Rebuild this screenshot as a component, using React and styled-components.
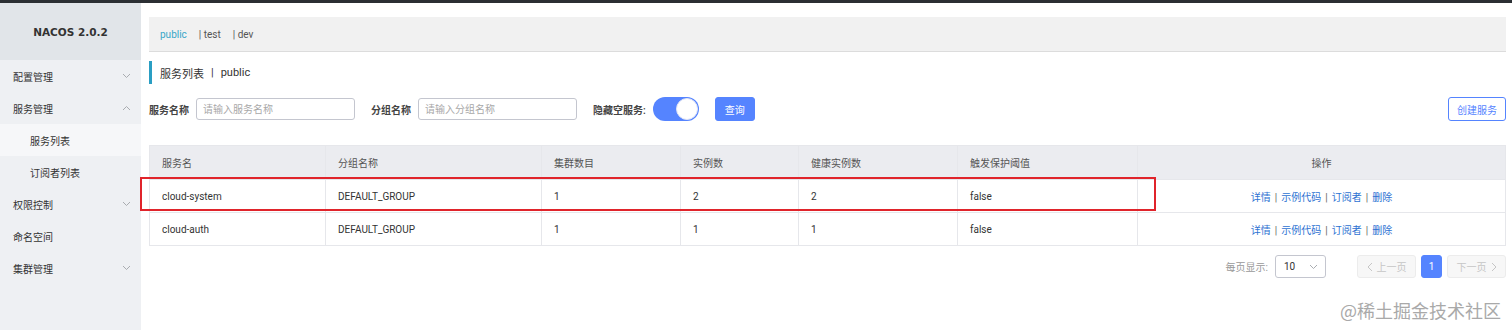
import styled, { createGlobalStyle } from 'styled-components'

const Global = createGlobalStyle`
  body {
    margin: 0;
    font-family: Roboto, "Noto Sans CJK SC", sans-serif;
    font-size: 10px;
    color: #333;
    background: #fff;
  }
  #root { width: 1512px; height: 330px; overflow: hidden; }
`

const Page = styled.div`
  position: relative;
  width: 1512px;
  height: 330px;
  border-top: 3px solid #2b2f33;
  box-sizing: border-box;
  display: flex;
`

const Sidebar = styled.aside`
  width: 141px;
  flex-shrink: 0;
  background: #eef0f3;
  display: flex;
  flex-direction: column;
`

const Brand = styled.div`
  height: 57px;
  background: #e1e5e9;
  display: flex;
  align-items: center;
  justify-content: center;
  font-weight: 700;
  font-size: 10.5px;
  color: #333;
  font-family: "DejaVu Sans", "Noto Sans", sans-serif;
`

const MenuItem = styled.div`
  height: 32px;
  display: flex;
  align-items: center;
  justify-content: space-between;
  padding: 0 10px 0 ${(p) => (p.$sub ? '30px' : '13px')};
  background: ${(p) => (p.$active ? '#f6f7f9' : 'transparent')};
  color: #333;
  font-size: 10px;
`

const Chevron = ({ up }) => (
  <svg width="9" height="6" viewBox="0 0 9 6" fill="none" stroke="#a0a4a8" strokeWidth="0.9">
    {up ? <path d="M1 5 L4.5 1.5 L8 5" /> : <path d="M1 1 L4.5 4.5 L8 1" />}
  </svg>
)

const Main = styled.main`
  flex: 1;
  padding: 14px 7px 0 8px;
  display: flex;
  flex-direction: column;
`

const NsBar = styled.div`
  height: 34px;
  background: #f1f1f1;
  border-bottom: 1px solid #dcdcdc;
  display: flex;
  align-items: center;
  padding-left: 11px;
  gap: 12px;
  font-size: 10px;
`

const Ns = styled.span`
  color: ${(p) => (p.$active ? '#35a6c8' : '#555')};
`

const Title = styled.div`
  margin-top: 9px;
  height: 23px;
  border-left: 3px solid #2a9ec3;
  display: flex;
  align-items: center;
  padding-left: 8px;
  font-size: 11px;
  color: #333;
`

const TitleSep = styled.span`
  margin: 0 7px;
`

const SearchRow = styled.div`
  margin-top: 13px;
  height: 24px;
  display: flex;
  align-items: center;
`

const Label = styled.span`
  font-size: 10px;
  font-weight: 600;
  color: #444;
  margin-right: ${(p) => p.$gap ?? 7}px;
`

const Input = styled.input`
  width: 159px;
  height: 22px;
  box-sizing: border-box;
  border: 1px solid #c4c6cf;
  border-radius: 3px;
  padding: 0 6px;
  font-size: 10px;
  font-family: inherit;
  margin-right: 16px;
  &::placeholder { color: #a8a8a8; }
`

const Switch = styled.div`
  width: 46px;
  height: 24px;
  border-radius: 12px;
  background: #5584ff;
  position: relative;
  margin-right: 16px;
  &::after {
    content: '';
    position: absolute;
    right: 1px;
    top: 1px;
    width: 20px;
    height: 20px;
    border-radius: 50%;
    background: #fff;
    border: 1px solid #e0e4f5;
  }
`

const Button = styled.button`
  height: 24px;
  padding: 0 ${(p) => (p.$outline ? '8px' : '9px')};
  border-radius: 3px;
  font-size: 10px;
  font-family: inherit;
  border: 1px solid #5584ff;
  background: ${(p) => (p.$outline ? '#fff' : '#5584ff')};
  color: ${(p) => (p.$outline ? '#5584ff' : '#fff')};
  margin-left: ${(p) => (p.$push ? 'auto' : '0')};
`

const Table = styled.table`
  margin-top: 24px;
  width: 1356px;
  border-collapse: collapse;
  table-layout: fixed;
  font-size: 10px;
  td, th {
    border: 1px solid #e6e7eb;
    padding: 0 12px;
    text-align: left;
    font-weight: 400;
  }
  th {
    height: 33px;
    background: #ebecf0;
    color: #555;
  }
  td {
    height: 32px;
    color: #333;
  }
`

const Links = styled.td`
  && { text-align: center; color: #2d72d2; }
`

const Sep = styled.span`
  color: #666;
  margin: 0 4px;
`

const Pager = styled.div`
  margin-top: 9px;
  display: flex;
  align-items: center;
  justify-content: flex-end;
  gap: 5px;
  height: 23px;
`

const PagerLabel = styled.span`
  color: #999;
  font-size: 10px;
  margin-right: 2px;
`

const Select = styled.div`
  width: 51px;
  height: 23px;
  box-sizing: border-box;
  border: 1px solid #c4c6cf;
  border-radius: 3px;
  display: flex;
  align-items: center;
  justify-content: space-between;
  padding: 0 7px 0 8px;
  margin-right: 26px;
  font-size: 10px;
`

const PageBtn = styled.div`
  height: 23px;
  box-sizing: border-box;
  width: ${(p) => (p.$current ? '21px' : '59px')};
  border-radius: 3px;
  display: flex;
  align-items: center;
  justify-content: center;
  gap: 4px;
  font-size: 10px;
  background: ${(p) => (p.$current ? '#5584ff' : '#f7f7f7')};
  border: 1px solid ${(p) => (p.$current ? '#5584ff' : '#ececec')};
  color: ${(p) => (p.$current ? '#fff' : '#c6c6c6')};
`

const RedBox = styled.div`
  position: absolute;
  left: 140px;
  top: 174px;
  width: 1016px;
  height: 34px;
  border: 2px solid #e0242b;
  box-sizing: border-box;
  pointer-events: none;
`

const Watermark = styled.div`
  position: absolute;
  right: 11px;
  bottom: 8px;
  font-size: 18px;
  line-height: 24px;
  color: #a9a9a9;
  font-family: "Noto Sans CJK SC", sans-serif;
`

const Arrow = ({ dir, color = '#c6c6c6' }) => (
  <svg width="6" height="10" viewBox="0 0 6 10" fill="none" stroke={color} strokeWidth="1">
    {dir === 'left' ? <path d="M5 1 L1 5 L5 9" /> : <path d="M1 1 L5 5 L1 9" />}
  </svg>
)

const menu = [
  { label: '配置管理', arrow: 'down' },
  { label: '服务管理', arrow: 'up' },
  { label: '服务列表', sub: true, active: true },
  { label: '订阅者列表', sub: true },
  { label: '权限控制', arrow: 'down' },
  { label: '命名空间' },
  { label: '集群管理', arrow: 'down' },
]

const rows = [
  { name: 'cloud-system', group: 'DEFAULT_GROUP', cluster: 1, inst: 2, healthy: 2, prot: 'false' },
  { name: 'cloud-auth', group: 'DEFAULT_GROUP', cluster: 1, inst: 1, healthy: 1, prot: 'false' },
]

const cols = [176, 216, 139, 118, 159, 180, 368]

export default function App() {
  return (
    <Page>
      <Global />
      <Sidebar>
        <Brand>NACOS 2.0.2</Brand>
        {menu.map((m) => (
          <MenuItem key={m.label} $sub={m.sub} $active={m.active}>
            <span>{m.label}</span>
            {m.arrow && <Chevron up={m.arrow === 'up'} />}
          </MenuItem>
        ))}
      </Sidebar>
      <Main>
        <NsBar>
          <Ns $active>public</Ns>
          <Ns>| test</Ns>
          <Ns>| dev</Ns>
        </NsBar>
        <Title>服务列表<TitleSep>|</TitleSep>public</Title>
        <SearchRow>
          <Label>服务名称</Label>
          <Input placeholder="请输入服务名称" />
          <Label>分组名称</Label>
          <Input placeholder="请输入分组名称" />
          <Label $gap={7}>隐藏空服务:</Label>
          <Switch />
          <Button>查询</Button>
          <Button $outline $push>创建服务</Button>
        </SearchRow>
        <Table>
          <colgroup>
            {cols.map((w, i) => <col key={i} style={{ width: w }} />)}
          </colgroup>
          <thead>
            <tr>
              <th>服务名</th>
              <th>分组名称</th>
              <th>集群数目</th>
              <th>实例数</th>
              <th>健康实例数</th>
              <th>触发保护阈值</th>
              <th style={{ textAlign: 'center' }}>操作</th>
            </tr>
          </thead>
          <tbody>
            {rows.map((r) => (
              <tr key={r.name}>
                <td>{r.name}</td>
                <td>{r.group}</td>
                <td>{r.cluster}</td>
                <td>{r.inst}</td>
                <td>{r.healthy}</td>
                <td>{r.prot}</td>
                <Links>
                  详情<Sep>|</Sep>示例代码<Sep>|</Sep>订阅者<Sep>|</Sep>删除
                </Links>
              </tr>
            ))}
          </tbody>
        </Table>
        <Pager>
          <PagerLabel>每页显示:</PagerLabel>
          <Select>
            <span>10</span>
            <Chevron />
          </Select>
          <PageBtn><Arrow dir="left" />上一页</PageBtn>
          <PageBtn $current>1</PageBtn>
          <PageBtn>下一页<Arrow dir="right" /></PageBtn>
        </Pager>
      </Main>
      <RedBox />
      <Watermark>@稀土掘金技术社区</Watermark>
    </Page>
  )
}
